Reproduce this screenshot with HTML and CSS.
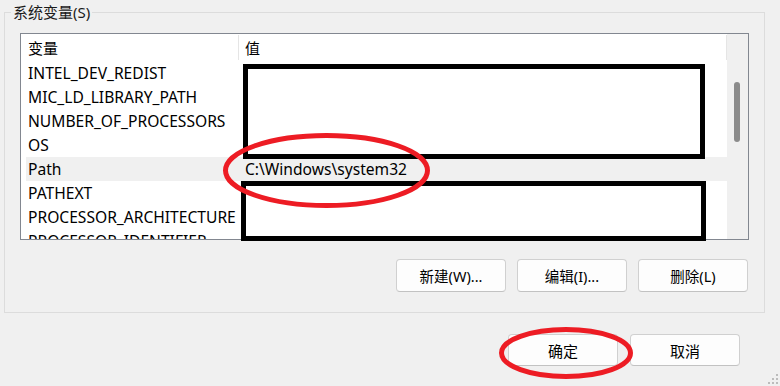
FILE: index.html
```html
<!DOCTYPE html>
<html lang="zh-CN">
<head>
  <meta charset="UTF-8" />
  <title>环境变量</title>
  <link rel="stylesheet" href="styles.css">
</head>
<body>

  <div class="dialog">
    <fieldset class="group">
      <legend>系统变量(S)</legend>

      <div class="list">
        <div class="table">
          <div class="row head">
            <div class="cell name">变量</div>
            <div class="cell value">值</div>
          </div>
          <div class="rows">
            <div class="row"><div class="cell name">INTEL_DEV_REDIST</div><div class="cell value"></div></div>
            <div class="row"><div class="cell name">MIC_LD_LIBRARY_PATH</div><div class="cell value"></div></div>
            <div class="row"><div class="cell name">NUMBER_OF_PROCESSORS</div><div class="cell value"></div></div>
            <div class="row"><div class="cell name">OS</div><div class="cell value"></div></div>
            <div class="row selected"><div class="cell name">Path</div><div class="cell value">C:\Windows\system32</div></div>
            <div class="row"><div class="cell name">PATHEXT</div><div class="cell value"></div></div>
            <div class="row"><div class="cell name">PROCESSOR_ARCHITECTURE</div><div class="cell value"></div></div>
            <div class="row"><div class="cell name">PROCESSOR_IDENTIFIER</div><div class="cell value"></div></div>
          </div>
        </div>
        <div class="scrollbar"><div class="thumb"></div></div>
      </div>

      <div class="actions">
        <button class="btn">新建(W)...</button>
        <button class="btn">编辑(I)...</button>
        <button class="btn">删除(L)</button>
      </div>
    </fieldset>

    <div class="footer">
      <button class="btn">确定</button>
      <button class="btn">取消</button>
    </div>
  </div>

  <!-- 涂黑的值 + 红圈标注 -->
  <svg class="marks" width="780" height="386" viewBox="0 0 780 386">
    <rect x="245.5" y="66.5" width="457" height="90" fill="none" stroke="#000" stroke-width="5"/>
    <rect x="243.5" y="183.5" width="460" height="55" fill="none" stroke="#000" stroke-width="5"/>
    <ellipse cx="326.5" cy="170.5" rx="101" ry="35" fill="none" stroke="#ed1c24" stroke-width="5"/>
    <ellipse cx="566" cy="353" rx="64.5" ry="23.5" fill="none" stroke="#ed1c24" stroke-width="5"/>
  </svg>

  <!-- 右下角拖拽手柄 -->
  <svg class="grip" width="14" height="14" viewBox="0 0 14 14">
    <rect x="10" y="2" width="2" height="2"/>
    <rect x="6" y="6" width="2" height="2"/>
    <rect x="10" y="6" width="2" height="2"/>
    <rect x="2" y="10" width="2" height="2"/>
    <rect x="6" y="10" width="2" height="2"/>
    <rect x="10" y="10" width="2" height="2"/>
  </svg>

</body>
</html>
```

FILE: styles.css
```css
/* 对话框背景 */
html, body {
  margin: 0; padding: 0;
  width: 100%; height: 100%;
  background: #f0f0f0;
  font-family: "Noto Sans", "Noto Sans CJK SC", sans-serif;
  color: #000;
  overflow: hidden;
}

.dialog {
  padding-top: 2px;
}

/* 分组框 */
.group {
  margin: 0 15px 0 4px;
  padding: 0 0 20px 0;
  border: 1px solid #dcdcdc;
  min-width: 0;
}
.group legend {
  margin-left: 6px;
  padding: 0 2px;
  font-size: 15px;
  line-height: 20px;
  color: #1a1a1a;
}

/* 列表框 */
.list {
  display: flex;
  width: 729px;
  height: 207px;
  box-sizing: border-box;
  margin: 11px 0 0 15px;
  border: 1px solid #828790;
  background: #fff;
}
.table {
  width: 706px;
  padding-left: 5px;
  box-sizing: border-box;
  overflow: hidden;
}
.row {
  display: flex;
  height: 24px;
  align-items: center;
  font-size: 15.6px;
  white-space: nowrap;
}
.row.selected {
  background: #f0f0f0;
}
.cell.name {
  width: 213px;
  padding-left: 2px;
  box-sizing: border-box;
  overflow: hidden;
}
.cell.value {
  width: 488px;
  padding-left: 6px;
  box-sizing: border-box;
}

/* 表头 */
.row.head {
  height: 27px;
  align-items: stretch;
  padding-top: 1px;
  box-sizing: border-box;
  font-size: 15px;
}
.row.head .cell {
  display: flex;
  align-items: center;
  height: 25px;
  border-right: 1px solid #e5e5e5;
}

/* 滚动条 */
.scrollbar {
  width: 21px;
  background: #f0f0f0;
}
.thumb {
  width: 6px;
  height: 60px;
  margin: 48px 0 0 7px;
  border-radius: 3px;
  background: #8b8b8b;
}

/* 按钮 */
.btn {
  width: 110px;
  height: 33px;
  padding: 0;
  border: 1px solid #d0d0d0;
  border-bottom-color: #c2c2c2;
  border-radius: 4px;
  background: #fdfdfd;
  font-family: "Noto Sans", "Noto Sans CJK SC", sans-serif;
  font-size: 14.5px;
  color: #000;
}
.actions {
  display: flex;
  justify-content: flex-end;
  gap: 11px;
  margin: 19px 16px 0 0;
}
.footer {
  display: flex;
  justify-content: flex-end;
  gap: 12px;
  margin: 21px 40px 0 0;
}
.footer .btn {
  height: 32px;
  font-size: 15px;
}

/* 覆盖层 */
.marks {
  position: absolute;
  left: 0; top: 0;
  pointer-events: none;
}
.grip {
  position: absolute;
  right: 0; bottom: 0;
  fill: #bcbcbc;
}
```
